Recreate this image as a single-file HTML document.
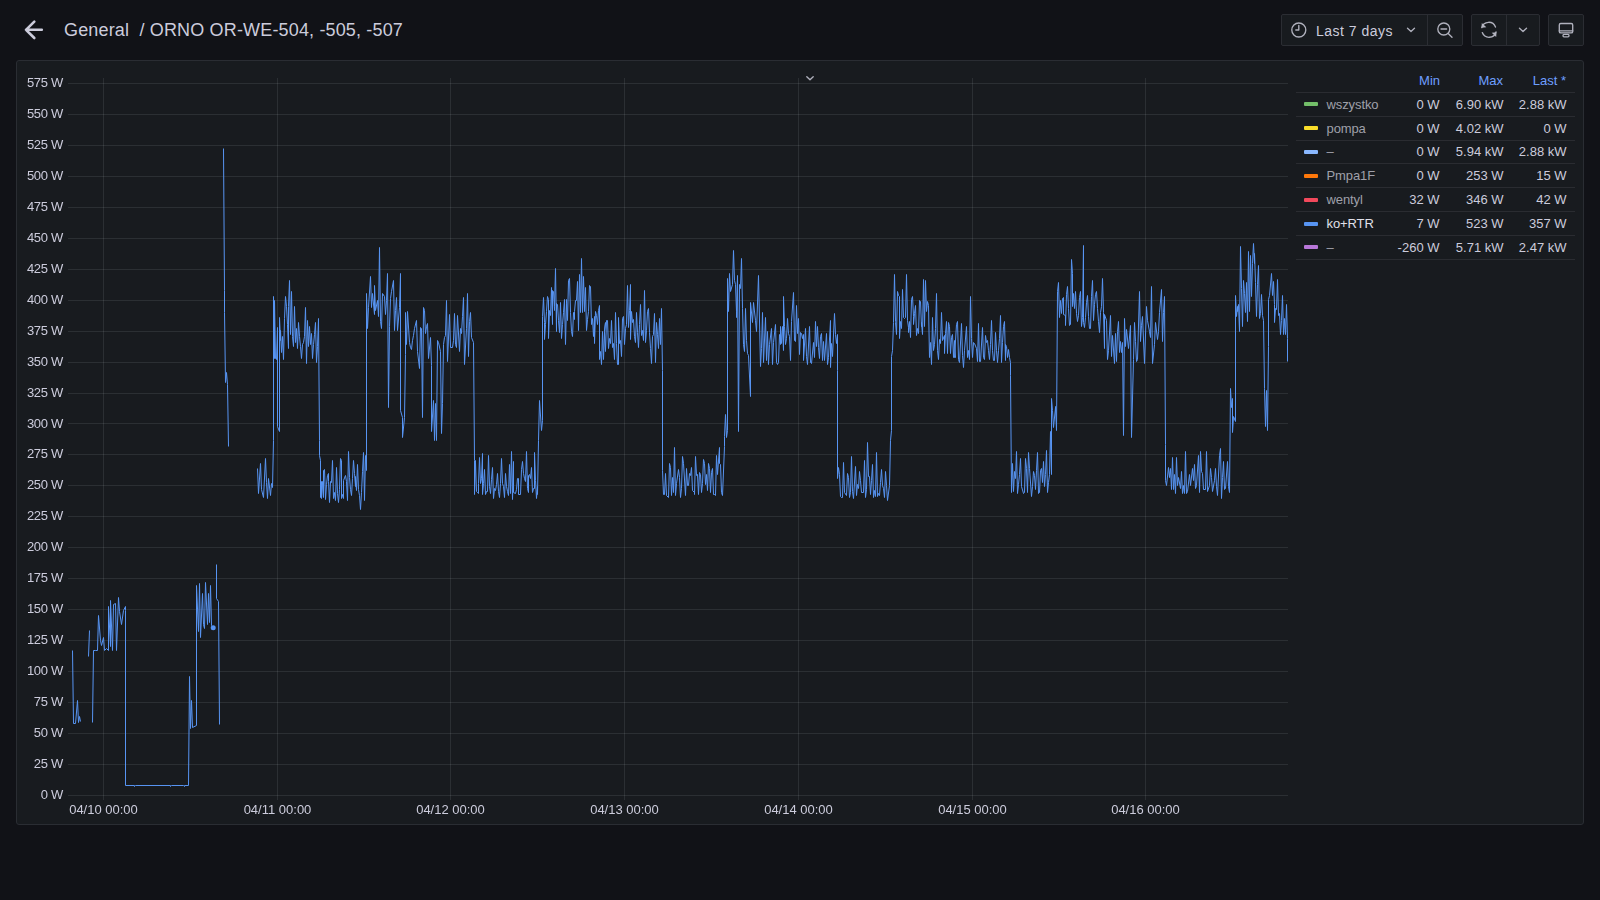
<!DOCTYPE html>
<html><head><meta charset="utf-8">
<style>
*{box-sizing:border-box;margin:0;padding:0}
html,body{width:1600px;height:900px;overflow:hidden;background:#111217;font-family:"Liberation Sans",sans-serif;color:#ccccdc}
.abs{position:absolute}
svg{position:absolute;left:0;top:0;overflow:visible}
#title{position:absolute;left:64px;top:20px;font-size:18px;line-height:20px;color:#ccccdc;white-space:pre;letter-spacing:0.16px}
.btn{position:absolute;top:14px;height:32px;border:1px solid #2b2d33;background:#181b1f;border-radius:2px}
.vd{position:absolute;top:15px;height:30px;width:1px;background:#2b2d33}
#panel{position:absolute;left:16px;top:60px;width:1568px;height:765px;background:#181b1f;border:1px solid #2a2d33;border-radius:3px}
.yl{position:absolute;left:0;width:63px;text-align:right;font-size:13px;line-height:18px;color:#ccccdc;letter-spacing:-0.3px;white-space:pre}
.xl{position:absolute;top:801px;width:100px;text-align:center;font-size:13px;line-height:18px;color:#ccccdc;white-space:pre}
.lh{position:absolute;top:72px;font-size:13px;line-height:18px;color:#6e9fff;text-align:right}
.sw{position:absolute;left:1304px;width:14px;height:4px;border-radius:1px}
.ln{position:absolute;left:1326.5px;font-size:13px;line-height:18px;color:#9fa0aa;letter-spacing:-0.1px}
.ln.act{color:#e0e0ea}
.lv{position:absolute;font-size:13px;line-height:18px;color:#ccccdc;text-align:right;width:80px;white-space:pre}
</style></head><body>
<svg width="1600" height="900">
<path d="M41.8 29.8H26 M34.3 21.6L26 29.8L34.3 38" fill="none" stroke="#ccccdc" stroke-width="2.6" stroke-linecap="round" stroke-linejoin="round"/>
</svg>
<div id="title">General  / ORNO OR-WE-504, -505, -507</div>

<div class="btn" style="left:1281px;width:182px"></div>
<div class="vd" style="left:1427px"></div>
<div class="btn" style="left:1471px;width:69px"></div>
<div class="vd" style="left:1506px"></div>
<div class="btn" style="left:1548px;width:36px"></div>
<div class="abs" style="left:1316px;top:21.6px;font-size:14px;line-height:18px;color:#ccccdc;letter-spacing:0.5px;white-space:pre">Last 7 days</div>
<svg width="1600" height="900">
<g fill="none" stroke="#b0b1bd" stroke-width="1.35" stroke-linecap="round" stroke-linejoin="round">
<circle cx="1298.8" cy="30" r="7"/>
<path d="M1298.8 25.5V30H1295.8"/>
<path d="M1407.5 28.3L1411 31.5L1414.5 28.3"/>
<circle cx="1443.8" cy="29" r="6"/>
<path d="M1448.2 33.4L1452 37.2 M1441 29H1446.6"/>
<path d="M1481.8 27.6A7.2 7.2 0 0 1 1495.5 27 M1496 32A7.2 7.2 0 0 1 1482.3 32.6"/>
<path d="M1519.5 28.3L1523 31.5L1526.5 28.3"/>
<rect x="1559.3" y="23.5" width="13.4" height="9.4" rx="1.5"/>
<path d="M1559.3 30.8H1572.7"/><rect x="1563" y="34.4" width="6" height="2.4" rx="1"/>
</g>
<g fill="#b4b5c1">
<path d="M1481.8 23L1481.5 27.8L1486.3 27.3Z"/>
<path d="M1496.2 37L1496.5 32.2L1491.7 32.7Z"/>
</g>
</svg>

<div id="panel"></div>
<svg width="1600" height="900">
<g stroke="rgba(240,250,255,0.09)" stroke-width="1">
<line x1="68" y1="795.5" x2="1288" y2="795.5"/>
<line x1="68" y1="764.5" x2="1288" y2="764.5"/>
<line x1="68" y1="733.5" x2="1288" y2="733.5"/>
<line x1="68" y1="702.5" x2="1288" y2="702.5"/>
<line x1="68" y1="671.5" x2="1288" y2="671.5"/>
<line x1="68" y1="640.5" x2="1288" y2="640.5"/>
<line x1="68" y1="609.5" x2="1288" y2="609.5"/>
<line x1="68" y1="578.5" x2="1288" y2="578.5"/>
<line x1="68" y1="547.5" x2="1288" y2="547.5"/>
<line x1="68" y1="516.5" x2="1288" y2="516.5"/>
<line x1="68" y1="485.5" x2="1288" y2="485.5"/>
<line x1="68" y1="454.5" x2="1288" y2="454.5"/>
<line x1="68" y1="423.5" x2="1288" y2="423.5"/>
<line x1="68" y1="393.5" x2="1288" y2="393.5"/>
<line x1="68" y1="362.5" x2="1288" y2="362.5"/>
<line x1="68" y1="331.5" x2="1288" y2="331.5"/>
<line x1="68" y1="300.5" x2="1288" y2="300.5"/>
<line x1="68" y1="269.5" x2="1288" y2="269.5"/>
<line x1="68" y1="238.5" x2="1288" y2="238.5"/>
<line x1="68" y1="207.5" x2="1288" y2="207.5"/>
<line x1="68" y1="176.5" x2="1288" y2="176.5"/>
<line x1="68" y1="145.5" x2="1288" y2="145.5"/>
<line x1="68" y1="114.5" x2="1288" y2="114.5"/>
<line x1="68" y1="83.5" x2="1288" y2="83.5"/>
<line x1="103.5" y1="78" x2="103.5" y2="800"/>
<line x1="277.5" y1="78" x2="277.5" y2="800"/>
<line x1="450.5" y1="78" x2="450.5" y2="800"/>
<line x1="624.5" y1="78" x2="624.5" y2="800"/>
<line x1="798.5" y1="78" x2="798.5" y2="800"/>
<line x1="972.5" y1="78" x2="972.5" y2="800"/>
<line x1="1145.5" y1="78" x2="1145.5" y2="800"/>
</g>
<g fill="none" stroke="#5794f2" stroke-width="1" stroke-linejoin="round">
<polyline points="72.5,650.5 73.5,723.5 75.5,723.5 77.5,700.5 78.5,722.5 79.5,716.5 80.5,721.5"/>
<polyline points="88.5,656.5 89.5,630.5"/>
<polyline points="92.5,722.5 93.5,650.5 95.5,650.5 97.5,650.5 98.5,615.5 100.5,640.5 101.5,645.5 103.5,637.5 104.5,650.5 106.5,648.5 108.5,650.5 108.5,606.5 110.5,646.5 110.5,600.5 112.5,650.5 113.5,604.5 115.5,603.5 116.5,650.5 118.5,597.5 119.5,611.5 121.5,624.5 123.5,610.5 125.5,606.5 125.5,610.5 125.5,785.5 134.5,785.5 134.5,786.5 135.5,785.5 170.5,785.5 170.5,786.5 171.5,785.5 183.5,785.5 184.5,786.5 184.5,785.5 188.5,785.5 189.5,676.5 190.5,728.5 191.5,700.5 192.5,727.5 196.5,725.5 196.5,585.5 198.5,631.5 199.5,583.5 200.5,637.5 202.5,593.5 203.5,624.5 204.5,628.5 205.5,582.5 207.5,624.5 208.5,593.5 209.5,622.5 210.5,585.5 211.5,625.5 213.5,627.5"/>
<polyline points="216.5,564.5 216.5,598.5 218.5,601.5 219.5,724.5"/>
<polyline points="223.5,148.5 224.5,290.5 224.5,312.5 225.5,382.5 226.5,372.5 227.5,384.5 228.5,446.5"/>
<polyline points="257.5,468.5 258.5,493.5 260.5,463.5 261.5,489.5 263.5,497.5 265.5,458.5 266.5,482.5 267.5,498.5 268.5,478.5 270.5,495.5 271.5,483.5 272.5,487.5 273.5,440.5 273.5,296.5 274.5,358.5 274.5,300.5 275.5,358.5 276.5,359.5 277.5,327.5 277.5,426.5 279.5,431.5 279.5,317.5 280.5,340.5 280.5,330.5 281.5,352.5 282.5,336.5 283.5,359.5 284.5,318.5 285.5,296.5 286.5,306.5 287.5,324.5 288.5,348.5 288.5,306.5 289.5,280.5 290.5,334.5 291.5,291.5 292.5,336.5 293.5,346.5 294.5,306.5 295.5,342.5 296.5,328.5 297.5,348.5 298.5,322.5 299.5,336.5 300.5,346.5 301.5,358.5 302.5,344.5 303.5,342.5 304.5,336.5 305.5,307.5 306.5,363.5 307.5,320.5 308.5,346.5 309.5,326.5 310.5,344.5 311.5,333.5 312.5,358.5 313.5,344.5 314.5,334.5 315.5,322.5 316.5,362.5 317.5,346.5 318.5,318.5 319.5,440.5 319.5,455.5 320.5,460.5 320.5,497.5 321.5,481.5 321.5,498.5 322.5,481.5 322.5,482.5 323.5,497.5 323.5,470.5 324.5,469.5 325.5,498.5 325.5,499.5 326.5,484.5 327.5,475.5 328.5,473.5 328.5,481.5 329.5,502.5 330.5,481.5 331.5,482.5 332.5,460.5 333.5,498.5 334.5,492.5 335.5,500.5 336.5,467.5 337.5,493.5 338.5,502.5 339.5,489.5 340.5,458.5 341.5,460.5 341.5,498.5 342.5,494.5 343.5,498.5 343.5,480.5 345.5,475.5 345.5,475.5 346.5,481.5 347.5,500.5 348.5,451.5 349.5,477.5 350.5,489.5 351.5,495.5 352.5,478.5 353.5,460.5 354.5,473.5 355.5,486.5 355.5,476.5 356.5,490.5 357.5,464.5 358.5,489.5 359.5,495.5 360.5,509.5 361.5,492.5 362.5,471.5 363.5,452.5 364.5,500.5 365.5,455.5 366.5,470.5 366.5,293.5 367.5,328.5 368.5,307.5 370.5,276.5 371.5,307.5 372.5,293.5 374.5,314.5 374.5,285.5 375.5,310.5 377.5,300.5 378.5,316.5 379.5,247.5 380.5,321.5 381.5,328.5 382.5,293.5 384.5,296.5 385.5,314.5 386.5,300.5 387.5,273.5 388.5,407.5 389.5,326.5 390.5,298.5 391.5,291.5 393.5,280.5 394.5,330.5 395.5,310.5 396.5,297.5 397.5,330.5 399.5,307.5 400.5,273.5 400.5,410.5 402.5,417.5 402.5,437.5 404.5,417.5 405.5,354.5 405.5,312.5 406.5,344.5 407.5,311.5 409.5,342.5 410.5,347.5 411.5,349.5 412.5,340.5 413.5,335.5 414.5,328.5 416.5,320.5 417.5,351.5 419.5,368.5 420.5,327.5 421.5,328.5 422.5,417.5 423.5,307.5 424.5,310.5 425.5,333.5 426.5,326.5 427.5,323.5 428.5,358.5 430.5,337.5 431.5,365.5 431.5,431.5 433.5,400.5 434.5,440.5 435.5,403.5 436.5,440.5 437.5,340.5 438.5,342.5 440.5,351.5 441.5,433.5 442.5,403.5 443.5,344.5 444.5,337.5 445.5,335.5 446.5,300.5 447.5,361.5 449.5,314.5 450.5,347.5 452.5,347.5 453.5,340.5 454.5,313.5 455.5,344.5 456.5,347.5 457.5,315.5 459.5,351.5 460.5,328.5 461.5,333.5 462.5,316.5 463.5,297.5 464.5,364.5 466.5,328.5 467.5,293.5 468.5,356.5 469.5,321.5 470.5,312.5 471.5,337.5 473.5,342.5 474.5,460.5 474.5,494.5 475.5,460.5 475.5,462.5 476.5,491.5 477.5,492.5 478.5,493.5 478.5,483.5 479.5,457.5 480.5,483.5 481.5,478.5 482.5,453.5 482.5,494.5 483.5,483.5 484.5,469.5 485.5,494.5 486.5,491.5 487.5,491.5 488.5,455.5 489.5,486.5 490.5,493.5 491.5,479.5 492.5,467.5 493.5,498.5 494.5,488.5 495.5,490.5 496.5,484.5 497.5,473.5 498.5,491.5 499.5,497.5 500.5,483.5 501.5,458.5 502.5,483.5 503.5,486.5 504.5,497.5 505.5,473.5 506.5,486.5 507.5,491.5 508.5,495.5 509.5,464.5 510.5,493.5 511.5,451.5 512.5,499.5 513.5,461.5 513.5,492.5 515.5,493.5 516.5,489.5 517.5,478.5 518.5,478.5 518.5,494.5 520.5,494.5 521.5,469.5 522.5,461.5 523.5,473.5 524.5,478.5 525.5,481.5 526.5,451.5 527.5,488.5 528.5,492.5 528.5,475.5 529.5,474.5 530.5,478.5 531.5,467.5 532.5,492.5 533.5,488.5 534.5,488.5 534.5,452.5 535.5,480.5 536.5,498.5 537.5,486.5 537.5,494.5 538.5,440.5 539.5,400.5 541.5,430.5 542.5,420.5 542.5,316.5 543.5,297.5 544.5,322.5 544.5,339.5 545.5,324.5 546.5,311.5 547.5,296.5 548.5,299.5 548.5,338.5 549.5,310.5 550.5,315.5 551.5,287.5 552.5,324.5 552.5,290.5 553.5,291.5 554.5,310.5 554.5,306.5 555.5,268.5 556.5,331.5 556.5,303.5 557.5,304.5 558.5,320.5 559.5,332.5 560.5,302.5 561.5,338.5 562.5,324.5 563.5,312.5 564.5,299.5 565.5,344.5 566.5,303.5 566.5,299.5 567.5,320.5 568.5,280.5 569.5,278.5 570.5,312.5 571.5,331.5 572.5,336.5 573.5,312.5 574.5,319.5 574.5,311.5 575.5,300.5 576.5,300.5 577.5,281.5 578.5,330.5 579.5,274.5 580.5,312.5 581.5,258.5 582.5,312.5 583.5,276.5 584.5,311.5 585.5,287.5 586.5,330.5 587.5,319.5 588.5,311.5 589.5,285.5 590.5,286.5 591.5,324.5 592.5,318.5 593.5,336.5 594.5,316.5 594.5,343.5 595.5,311.5 596.5,315.5 597.5,324.5 598.5,310.5 599.5,305.5 599.5,359.5 600.5,351.5 601.5,364.5 602.5,331.5 603.5,359.5 604.5,331.5 605.5,322.5 604.5,331.5 605.5,351.5 606.5,320.5 607.5,320.5 608.5,348.5 609.5,338.5 610.5,343.5 611.5,320.5 612.5,347.5 613.5,343.5 614.5,359.5 615.5,312.5 616.5,343.5 617.5,364.5 618.5,364.5 618.5,317.5 619.5,343.5 620.5,340.5 621.5,356.5 622.5,318.5 623.5,316.5 624.5,344.5 625.5,328.5 626.5,324.5 627.5,285.5 628.5,327.5 629.5,310.5 630.5,284.5 630.5,339.5 631.5,311.5 632.5,322.5 633.5,319.5 634.5,336.5 635.5,342.5 636.5,312.5 637.5,332.5 638.5,347.5 639.5,324.5 640.5,304.5 641.5,335.5 642.5,330.5 643.5,340.5 644.5,290.5 645.5,342.5 646.5,330.5 647.5,311.5 648.5,308.5 649.5,332.5 650.5,348.5 651.5,363.5 652.5,336.5 653.5,334.5 654.5,313.5 655.5,362.5 656.5,322.5 657.5,334.5 658.5,348.5 659.5,318.5 660.5,344.5 661.5,308.5 662.5,370.5 662.5,470.5 663.5,494.5 664.5,494.5 665.5,473.5 666.5,495.5 668.5,497.5 669.5,463.5 670.5,467.5 671.5,495.5 672.5,477.5 673.5,492.5 674.5,447.5 675.5,495.5 676.5,483.5 678.5,469.5 679.5,477.5 680.5,497.5 681.5,488.5 682.5,456.5 683.5,463.5 685.5,495.5 686.5,468.5 687.5,485.5 688.5,485.5 689.5,473.5 690.5,475.5 691.5,467.5 692.5,490.5 694.5,492.5 694.5,494.5 695.5,456.5 696.5,475.5 697.5,474.5 698.5,494.5 699.5,472.5 700.5,474.5 701.5,492.5 702.5,483.5 703.5,459.5 704.5,463.5 705.5,484.5 706.5,474.5 707.5,490.5 708.5,463.5 709.5,468.5 710.5,492.5 711.5,472.5 712.5,468.5 713.5,494.5 714.5,494.5 715.5,495.5 716.5,455.5 717.5,474.5 719.5,447.5 719.5,463.5 720.5,464.5 721.5,492.5 722.5,495.5 724.5,446.5 724.5,436.5 725.5,414.5 726.5,437.5 727.5,430.5 727.5,278.5 728.5,311.5 729.5,273.5 730.5,291.5 732.5,284.5 733.5,250.5 734.5,280.5 735.5,284.5 736.5,311.5 736.5,317.5 737.5,275.5 738.5,431.5 739.5,284.5 740.5,288.5 741.5,258.5 742.5,308.5 743.5,344.5 744.5,351.5 745.5,308.5 746.5,340.5 747.5,353.5 748.5,355.5 750.5,396.5 750.5,302.5 752.5,322.5 753.5,302.5 755.5,320.5 756.5,331.5 758.5,275.5 760.5,366.5 761.5,348.5 762.5,312.5 763.5,362.5 765.5,317.5 766.5,360.5 767.5,331.5 768.5,364.5 769.5,344.5 771.5,328.5 772.5,364.5 773.5,342.5 775.5,324.5 776.5,362.5 777.5,364.5 778.5,362.5 779.5,334.5 780.5,344.5 780.5,326.5 781.5,343.5 782.5,326.5 783.5,350.5 783.5,296.5 784.5,326.5 785.5,344.5 786.5,338.5 787.5,318.5 788.5,333.5 789.5,336.5 790.5,360.5 791.5,321.5 793.5,292.5 794.5,340.5 795.5,341.5 796.5,305.5 797.5,333.5 798.5,318.5 799.5,354.5 800.5,332.5 801.5,333.5 802.5,338.5 803.5,334.5 803.5,360.5 805.5,328.5 806.5,356.5 807.5,364.5 809.5,326.5 810.5,362.5 811.5,363.5 813.5,342.5 814.5,357.5 815.5,321.5 816.5,346.5 817.5,326.5 818.5,347.5 819.5,358.5 820.5,336.5 821.5,333.5 822.5,360.5 823.5,341.5 824.5,360.5 826.5,333.5 827.5,364.5 828.5,357.5 830.5,320.5 830.5,367.5 831.5,343.5 832.5,356.5 834.5,313.5 835.5,334.5 836.5,343.5 837.5,334.5 837.5,370.5 837.5,478.5 838.5,467.5 839.5,474.5 840.5,496.5 841.5,497.5 842.5,497.5 843.5,462.5 844.5,492.5 846.5,495.5 847.5,473.5 848.5,477.5 849.5,497.5 850.5,492.5 851.5,456.5 852.5,491.5 853.5,498.5 855.5,466.5 856.5,495.5 857.5,484.5 858.5,488.5 859.5,471.5 860.5,480.5 861.5,492.5 863.5,492.5 864.5,460.5 865.5,497.5 866.5,489.5 867.5,442.5 868.5,476.5 869.5,476.5 870.5,494.5 871.5,480.5 872.5,464.5 873.5,497.5 874.5,490.5 875.5,496.5 876.5,452.5 877.5,496.5 878.5,493.5 879.5,495.5 880.5,482.5 881.5,469.5 882.5,485.5 883.5,488.5 884.5,497.5 885.5,471.5 886.5,485.5 887.5,500.5 889.5,485.5 890.5,440.5 891.5,430.5 891.5,356.5 892.5,350.5 893.5,322.5 894.5,274.5 895.5,321.5 895.5,322.5 896.5,334.5 897.5,291.5 898.5,295.5 899.5,296.5 899.5,338.5 900.5,321.5 901.5,328.5 902.5,289.5 903.5,317.5 904.5,318.5 905.5,317.5 906.5,274.5 907.5,320.5 908.5,327.5 908.5,332.5 909.5,321.5 910.5,337.5 911.5,299.5 912.5,296.5 913.5,316.5 913.5,324.5 914.5,313.5 915.5,305.5 916.5,335.5 917.5,328.5 918.5,333.5 919.5,300.5 920.5,301.5 921.5,326.5 921.5,322.5 922.5,334.5 923.5,279.5 924.5,326.5 925.5,280.5 926.5,311.5 927.5,301.5 928.5,305.5 929.5,357.5 930.5,342.5 931.5,364.5 932.5,317.5 933.5,350.5 934.5,344.5 935.5,328.5 936.5,293.5 937.5,350.5 938.5,359.5 939.5,339.5 940.5,343.5 941.5,312.5 942.5,340.5 944.5,335.5 944.5,353.5 945.5,333.5 946.5,321.5 947.5,353.5 948.5,322.5 949.5,326.5 950.5,353.5 951.5,337.5 952.5,334.5 953.5,357.5 954.5,340.5 955.5,357.5 954.5,357.5 956.5,324.5 957.5,321.5 958.5,359.5 959.5,362.5 961.5,323.5 962.5,355.5 963.5,367.5 964.5,350.5 966.5,326.5 967.5,357.5 968.5,350.5 969.5,359.5 970.5,296.5 971.5,338.5 972.5,357.5 973.5,342.5 974.5,343.5 976.5,348.5 977.5,361.5 978.5,323.5 979.5,361.5 980.5,361.5 982.5,327.5 983.5,357.5 984.5,359.5 985.5,335.5 986.5,342.5 987.5,340.5 988.5,350.5 989.5,359.5 990.5,344.5 991.5,320.5 992.5,350.5 993.5,360.5 994.5,360.5 995.5,332.5 996.5,350.5 997.5,362.5 998.5,350.5 999.5,338.5 1000.5,315.5 1001.5,362.5 1002.5,342.5 1003.5,326.5 1004.5,321.5 1005.5,360.5 1005.5,344.5 1006.5,346.5 1007.5,357.5 1008.5,349.5 1009.5,357.5 1010.5,362.5 1010.5,375.5 1011.5,492.5 1012.5,463.5 1013.5,491.5 1014.5,471.5 1015.5,478.5 1016.5,451.5 1017.5,493.5 1018.5,484.5 1019.5,474.5 1020.5,458.5 1021.5,486.5 1023.5,493.5 1024.5,492.5 1025.5,458.5 1026.5,468.5 1027.5,492.5 1028.5,452.5 1029.5,468.5 1031.5,496.5 1032.5,486.5 1033.5,471.5 1034.5,475.5 1035.5,489.5 1036.5,470.5 1037.5,452.5 1038.5,493.5 1039.5,492.5 1040.5,470.5 1041.5,468.5 1042.5,482.5 1043.5,461.5 1044.5,486.5 1045.5,474.5 1046.5,450.5 1047.5,492.5 1048.5,482.5 1049.5,474.5 1050.5,431.5 1051.5,474.5 1051.5,398.5 1052.5,410.5 1053.5,427.5 1055.5,407.5 1055.5,406.5 1056.5,430.5 1057.5,291.5 1058.5,282.5 1059.5,317.5 1060.5,300.5 1061.5,313.5 1062.5,298.5 1063.5,297.5 1063.5,314.5 1065.5,315.5 1065.5,325.5 1066.5,294.5 1067.5,286.5 1068.5,308.5 1069.5,325.5 1070.5,324.5 1071.5,259.5 1072.5,273.5 1072.5,306.5 1073.5,293.5 1074.5,308.5 1075.5,291.5 1076.5,313.5 1077.5,321.5 1078.5,315.5 1079.5,297.5 1080.5,291.5 1081.5,326.5 1082.5,317.5 1083.5,245.5 1083.5,322.5 1084.5,327.5 1085.5,317.5 1086.5,302.5 1087.5,295.5 1088.5,316.5 1089.5,328.5 1090.5,328.5 1091.5,296.5 1092.5,280.5 1093.5,320.5 1094.5,304.5 1095.5,294.5 1096.5,291.5 1097.5,308.5 1098.5,321.5 1099.5,332.5 1100.5,312.5 1101.5,306.5 1102.5,278.5 1103.5,312.5 1104.5,348.5 1104.5,314.5 1106.5,320.5 1107.5,359.5 1108.5,350.5 1110.5,315.5 1111.5,356.5 1112.5,335.5 1114.5,363.5 1115.5,333.5 1116.5,361.5 1117.5,331.5 1118.5,321.5 1119.5,352.5 1120.5,341.5 1121.5,352.5 1122.5,342.5 1123.5,435.5 1124.5,318.5 1125.5,346.5 1126.5,329.5 1128.5,348.5 1130.5,325.5 1131.5,437.5 1133.5,359.5 1134.5,322.5 1135.5,341.5 1136.5,361.5 1137.5,359.5 1139.5,291.5 1140.5,341.5 1141.5,325.5 1142.5,316.5 1144.5,363.5 1146.5,306.5 1147.5,320.5 1149.5,331.5 1150.5,337.5 1151.5,286.5 1152.5,363.5 1154.5,344.5 1155.5,322.5 1157.5,339.5 1158.5,331.5 1159.5,312.5 1161.5,289.5 1162.5,341.5 1163.5,312.5 1164.5,296.5 1165.5,444.5 1165.5,480.5 1166.5,485.5 1168.5,467.5 1169.5,477.5 1170.5,468.5 1171.5,489.5 1172.5,457.5 1173.5,489.5 1174.5,474.5 1175.5,493.5 1176.5,457.5 1177.5,485.5 1178.5,477.5 1180.5,488.5 1181.5,471.5 1182.5,493.5 1183.5,485.5 1184.5,493.5 1185.5,451.5 1186.5,493.5 1187.5,491.5 1189.5,474.5 1190.5,485.5 1192.5,468.5 1193.5,480.5 1194.5,464.5 1195.5,488.5 1196.5,485.5 1198.5,455.5 1199.5,492.5 1200.5,451.5 1201.5,471.5 1202.5,473.5 1203.5,489.5 1205.5,489.5 1206.5,451.5 1207.5,491.5 1209.5,485.5 1210.5,468.5 1211.5,477.5 1212.5,491.5 1214.5,480.5 1215.5,468.5 1216.5,486.5 1217.5,495.5 1219.5,455.5 1220.5,448.5 1221.5,498.5 1222.5,477.5 1223.5,461.5 1224.5,489.5 1225.5,488.5 1227.5,461.5 1228.5,486.5 1229.5,492.5 1230.5,388.5 1231.5,407.5 1232.5,398.5 1232.5,432.5 1233.5,416.5 1235.5,421.5 1235.5,295.5 1236.5,316.5 1237.5,306.5 1237.5,311.5 1238.5,304.5 1239.5,331.5 1240.5,246.5 1241.5,288.5 1242.5,326.5 1242.5,325.5 1243.5,280.5 1244.5,293.5 1245.5,312.5 1246.5,282.5 1247.5,321.5 1248.5,251.5 1249.5,311.5 1250.5,255.5 1251.5,296.5 1252.5,263.5 1253.5,243.5 1254.5,263.5 1254.5,253.5 1255.5,282.5 1256.5,316.5 1257.5,284.5 1258.5,265.5 1259.5,318.5 1260.5,313.5 1261.5,294.5 1262.5,315.5 1263.5,320.5 1264.5,388.5 1265.5,426.5 1266.5,390.5 1267.5,430.5 1268.5,346.5 1268.5,299.5 1269.5,295.5 1271.5,273.5 1272.5,295.5 1273.5,281.5 1274.5,304.5 1274.5,322.5 1275.5,308.5 1276.5,309.5 1277.5,279.5 1278.5,315.5 1279.5,313.5 1280.5,334.5 1281.5,320.5 1282.5,295.5 1283.5,334.5 1284.5,318.5 1285.5,334.5 1286.5,304.5 1287.5,338.5 1287.5,361.5"/>
</g>
<circle cx="213.2" cy="627.8" r="2.5" fill="#5794f2"/>
<path d="M806.8 76.8L810 79.8L813.2 76.8" fill="none" stroke="#b0b1bd" stroke-width="1.35" stroke-linecap="round" stroke-linejoin="round"/>
</svg>
<div class="lh" style="left:1400px;width:40px">Min</div>
<div class="lh" style="left:1463px;width:40px">Max</div>
<div class="lh" style="left:1516px;width:50px">Last *</div>
<svg width="1600" height="900"><g stroke="#2a2c31" stroke-width="1"><line x1="1296" y1="92.5" x2="1575" y2="92.5"/><line x1="1296" y1="116.5" x2="1575" y2="116.5"/><line x1="1296" y1="140.5" x2="1575" y2="140.5"/><line x1="1296" y1="163.5" x2="1575" y2="163.5"/><line x1="1296" y1="187.5" x2="1575" y2="187.5"/><line x1="1296" y1="211.5" x2="1575" y2="211.5"/><line x1="1296" y1="235.5" x2="1575" y2="235.5"/><line x1="1296" y1="259.5" x2="1575" y2="259.5"/></g></svg>
<div class="sw" style="top:102.2px;background:#73bf69"></div>
<div class="ln" style="top:95.7px">wszystko</div>
<div class="lv" style="top:95.7px;left:1359.5px">0 W</div>
<div class="lv" style="top:95.7px;left:1423.5px">6.90 kW</div>
<div class="lv" style="top:95.7px;left:1486.5px">2.88 kW</div>
<div class="sw" style="top:126.1px;background:#fade2a"></div>
<div class="ln" style="top:119.6px">pompa</div>
<div class="lv" style="top:119.6px;left:1359.5px">0 W</div>
<div class="lv" style="top:119.6px;left:1423.5px">4.02 kW</div>
<div class="lv" style="top:119.6px;left:1486.5px">0 W</div>
<div class="sw" style="top:149.9px;background:#8ab8ff"></div>
<div class="ln" style="top:143.4px">–</div>
<div class="lv" style="top:143.4px;left:1359.5px">0 W</div>
<div class="lv" style="top:143.4px;left:1423.5px">5.94 kW</div>
<div class="lv" style="top:143.4px;left:1486.5px">2.88 kW</div>
<div class="sw" style="top:173.8px;background:#ff780a"></div>
<div class="ln" style="top:167.3px">Pmpa1F</div>
<div class="lv" style="top:167.3px;left:1359.5px">0 W</div>
<div class="lv" style="top:167.3px;left:1423.5px">253 W</div>
<div class="lv" style="top:167.3px;left:1486.5px">15 W</div>
<div class="sw" style="top:197.6px;background:#f2495c"></div>
<div class="ln" style="top:191.1px">wentyl</div>
<div class="lv" style="top:191.1px;left:1359.5px">32 W</div>
<div class="lv" style="top:191.1px;left:1423.5px">346 W</div>
<div class="lv" style="top:191.1px;left:1486.5px">42 W</div>
<div class="sw" style="top:221.5px;background:#5794f2"></div>
<div class="ln act" style="top:215.0px">ko+RTR</div>
<div class="lv" style="top:215.0px;left:1359.5px">7 W</div>
<div class="lv" style="top:215.0px;left:1423.5px">523 W</div>
<div class="lv" style="top:215.0px;left:1486.5px">357 W</div>
<div class="sw" style="top:245.4px;background:#b877d9"></div>
<div class="ln" style="top:238.9px">–</div>
<div class="lv" style="top:238.9px;left:1359.5px">-260 W</div>
<div class="lv" style="top:238.9px;left:1423.5px">5.71 kW</div>
<div class="lv" style="top:238.9px;left:1486.5px">2.47 kW</div>
<div style="position:absolute;left:0;top:0;width:66px;height:812px;will-change:transform;overflow:hidden">
<div class="yl" style="top:786.0px">0 W</div>
<div class="yl" style="top:755.0px">25 W</div>
<div class="yl" style="top:724.1px">50 W</div>
<div class="yl" style="top:693.1px">75 W</div>
<div class="yl" style="top:662.2px">100 W</div>
<div class="yl" style="top:631.2px">125 W</div>
<div class="yl" style="top:600.2px">150 W</div>
<div class="yl" style="top:569.3px">175 W</div>
<div class="yl" style="top:538.3px">200 W</div>
<div class="yl" style="top:507.4px">225 W</div>
<div class="yl" style="top:476.4px">250 W</div>
<div class="yl" style="top:445.4px">275 W</div>
<div class="yl" style="top:414.5px">300 W</div>
<div class="yl" style="top:383.5px">325 W</div>
<div class="yl" style="top:352.6px">350 W</div>
<div class="yl" style="top:321.6px">375 W</div>
<div class="yl" style="top:290.6px">400 W</div>
<div class="yl" style="top:259.7px">425 W</div>
<div class="yl" style="top:228.7px">450 W</div>
<div class="yl" style="top:197.8px">475 W</div>
<div class="yl" style="top:166.8px">500 W</div>
<div class="yl" style="top:135.8px">525 W</div>
<div class="yl" style="top:104.9px">550 W</div>
<div class="yl" style="top:73.9px">575 W</div>
</div>
<div style="position:absolute;left:0;top:798px;width:1290px;height:24px;will-change:transform;overflow:hidden"><div style="position:absolute;left:0;top:-798px;width:1290px;height:900px">
<div class="xl" style="left:53.5px">04/10 00:00</div>
<div class="xl" style="left:227.5px">04/11 00:00</div>
<div class="xl" style="left:400.5px">04/12 00:00</div>
<div class="xl" style="left:574.5px">04/13 00:00</div>
<div class="xl" style="left:748.5px">04/14 00:00</div>
<div class="xl" style="left:922.5px">04/15 00:00</div>
<div class="xl" style="left:1095.5px">04/16 00:00</div>
</div></div>
</body></html>
